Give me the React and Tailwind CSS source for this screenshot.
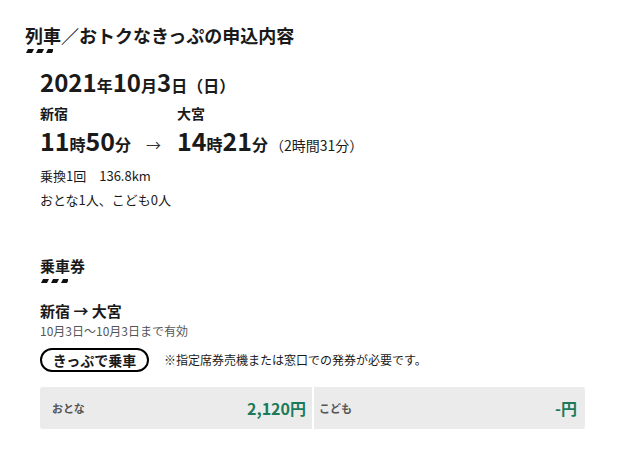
import React from "react";

function Dashes() {
  return (
    <svg width="28" height="4" viewBox="0 0 28 4" className="block">
      <polygon points="1,4 3,0 9,0 7,4" fill="#111" />
      <polygon points="11,4 13,0 19,0 17,4" fill="#111" />
      <polygon points="21,4 23,0 29,0 27,4" fill="#111" />
    </svg>
  );
}

export default function App() {
  return (
    <div
      className="w-[617px] h-[451px] bg-white text-[#1a1a1a] overflow-hidden"
      style={{ fontFamily: '"Noto Sans CJK JP", "Noto Sans", sans-serif' }}
    >
      {/* section title */}
      <div className="pt-[22px] pl-[25px]">
        <h1 className="text-[18px] font-bold leading-[26px]">列車／おトクなきっぷの申込内容</h1>
        <div className="mt-[1px]">
          <Dashes />
        </div>
      </div>

      <div className="pl-[40px] pr-[32px]">
        <div className="mt-[14px] font-bold leading-[30px]">
          <span className="text-[24px]">2021</span>
          <span className="text-[16px]">年</span>
          <span className="text-[24px]">10</span>
          <span className="text-[16px]">月</span>
          <span className="text-[24px]">3</span>
          <span className="text-[16px]">日（日）</span>
        </div>

        <div className="flex mt-[3px]">
          <div className="w-[137px]">
            <div className="text-[14px] font-bold leading-[20px]">新宿</div>
            <div className="font-bold leading-[34px] flex items-baseline">
              <span className="text-[25px]">11</span>
              <span className="text-[16px]">時</span>
              <span className="text-[25px]">50</span>
              <span className="text-[16px]">分</span>
              <span className="text-[15px] font-normal ml-[15px] text-[#333]">→</span>
            </div>
          </div>
          <div>
            <div className="text-[14px] font-bold leading-[20px]">大宮</div>
            <div className="leading-[34px] flex items-baseline">
              <span className="text-[25px] font-bold">14</span>
              <span className="text-[16px] font-bold">時</span>
              <span className="text-[25px] font-bold">21</span>
              <span className="text-[16px] font-bold">分</span>
              <span className="text-[14px] ml-[2px]">（2時間31分）</span>
            </div>
          </div>
        </div>

        <div className="mt-[2px] text-[13px] leading-[24px]">
          <div>乗換1回　136.8km</div>
          <div>おとな1人、こども0人</div>
        </div>

        {/* ticket section */}
        <div className="mt-[43px]">
          <h2 className="text-[15px] font-bold leading-[22px]">乗車券</h2>
          <div className="mt-[2px]">
            <Dashes />
          </div>
        </div>

        <div className="mt-[17px]">
          <div className="text-[15px] font-bold leading-[22px]">新宿 → 大宮</div>
          <div className="text-[12px] text-[#555] leading-[18px]">10月3日〜10月3日まで有効</div>
        </div>

        <div className="flex items-center mt-[8px]">
          <span className="inline-flex items-center justify-center w-[109px] h-[24px] rounded-full border-2 border-black text-[14px] font-bold leading-none">
            きっぷで乗車
          </span>
          <span className="ml-[15px] text-[12px]">※指定席券売機または窓口での発券が必要です。</span>
        </div>

        <div className="mt-[15px] w-[545px] h-[42px] flex rounded-[3px] overflow-hidden">
          <div className="flex-1 bg-[#ebebeb] flex items-center justify-between pl-[12px] pr-[6px]">
            <span className="text-[11px] font-bold text-[#555]">おとな</span>
            <span className="text-[16px] font-bold text-[#1b7a5a]">2,120円</span>
          </div>
          <div className="w-[2px] bg-white" />
          <div className="w-[271px] bg-[#ebebeb] flex items-center justify-between pl-[5px] pr-[8px]">
            <span className="text-[11px] font-bold text-[#555]">こども</span>
            <span className="text-[16px] font-bold text-[#1b7a5a]">-円</span>
          </div>
        </div>
      </div>
    </div>
  );
}
